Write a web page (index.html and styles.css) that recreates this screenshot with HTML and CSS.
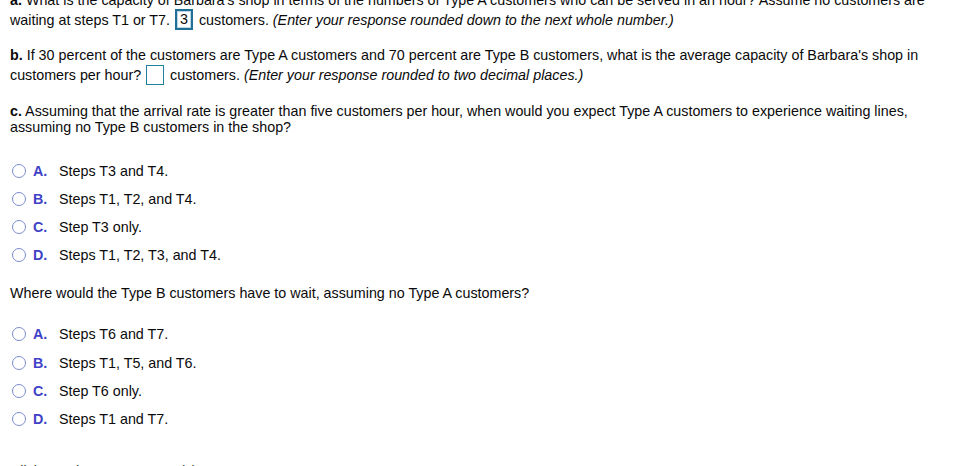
FILE: index.html
```html
<!DOCTYPE html>
<html>
<head>
<meta charset="utf-8">
<link rel="stylesheet" href="styles.css">
</head>
<body>
<div class="page">
  <p class="q q-a"><b>a.</b> What is the capacity of Barbara's shop in terms of the numbers of Type A customers who can be served in an hour? Assume no customers are<br>waiting at steps T1 or T7. <span class="box box-active">3</span> customers. <i>(Enter your response rounded down to the next whole number.)</i></p>
  <p class="q q-b"><b>b.</b> If 30 percent of the customers are Type A customers and 70 percent are Type B customers, what is the average capacity of Barbara's shop in<br>customers per hour? <span class="box"></span> customers. <i>(Enter your response rounded to two decimal places.)</i></p>
  <p class="q q-c"><b>c.</b> Assuming that the arrival rate is greater than five customers per hour, when would you expect Type A customers to experience waiting lines,<br>assuming no Type B customers in the shop?</p>
  <ul class="opts opts-1">
    <li class="opt"><span class="radio"></span><span class="letter">A.</span><span>Steps T3 and T4.</span></li>
    <li class="opt"><span class="radio"></span><span class="letter">B.</span><span>Steps T1, T2, and T4.</span></li>
    <li class="opt"><span class="radio"></span><span class="letter">C.</span><span>Step T3 only.</span></li>
    <li class="opt"><span class="radio"></span><span class="letter">D.</span><span>Steps T1, T2, T3, and T4.</span></li>
  </ul>
  <p class="q q-w">Where would the Type B customers have to wait, assuming no Type A customers?</p>
  <ul class="opts opts-2">
    <li class="opt"><span class="radio"></span><span class="letter">A.</span><span>Steps T6 and T7.</span></li>
    <li class="opt"><span class="radio"></span><span class="letter">B.</span><span>Steps T1, T5, and T6.</span></li>
    <li class="opt"><span class="radio"></span><span class="letter">C.</span><span>Step T6 only.</span></li>
    <li class="opt"><span class="radio"></span><span class="letter">D.</span><span>Steps T1 and T7.</span></li>
  </ul>
  <p class="q q-foot">Click to select your answer(s).</p>
</div>
</body>
</html>
```
FILE: styles.css
```css
html, body {
  margin: 0;
  padding: 0;
  background: #ffffff;
  overflow: hidden;
}
body {
  font-family: "Liberation Sans", Arial, Helvetica, sans-serif;
  font-size: 14.3px;
  color: #0a0a0a;
}
.page {
  padding-left: 10px;
  width: 935px;
}
.q {
  margin: 0;
  line-height: 16px;
  white-space: nowrap;
}
.q-a {
  margin-top: -10px;
  line-height: 20px;
}
.q-b {
  margin-top: 15px;
  line-height: 20px;
}
.q-c {
  margin-top: 18px;
}
.q-w {
  margin-top: 16px;
}
.q-foot {
  margin-top: 30px;
  color: #333;
}
.box {
  display: inline-block;
  box-sizing: border-box;
  width: 18px;
  height: 20px;
  border: 1px solid #1f7f9c;
  vertical-align: middle;
  margin: -3px 2px 0 1px;
  text-align: center;
  line-height: 18px;
}
.box-active {
  height: 21px;
  border: 2px solid #1f6f96;
  box-shadow: inset 0 0 0 1px #b9d6e6;
  line-height: 17px;
  text-align: left;
  padding-left: 3px;
}
.opts {
  list-style: none;
  margin: 0;
  padding: 0;
}
.opts-1 {
  margin-top: 22px;
}
.opts-2 {
  margin-top: 19px;
}
.opt {
  display: flex;
  align-items: center;
  height: 28px;
}
.opts-2 .opt {
  height: 28.3px;
}
.radio {
  box-sizing: border-box;
  width: 14px;
  height: 14px;
  border: 1.5px solid #7a8ccb;
  border-radius: 50%;
  margin-left: 2px;
  margin-right: 7px;
  background: #fff;
}
.letter {
  font-weight: bold;
  color: #3f42c6;
  width: 26px;
}
```
